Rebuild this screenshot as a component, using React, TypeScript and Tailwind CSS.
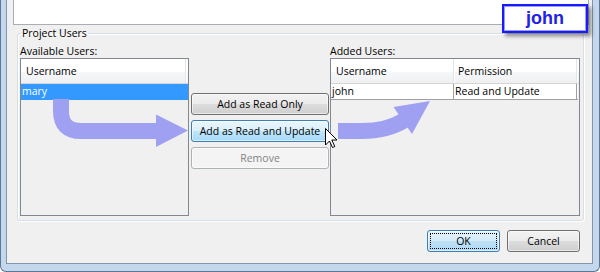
import type { ReactNode } from "react";

const ui = "[font-family:'Open_Sans',sans-serif] text-[10.5px] text-black";

type Variant = "normal" | "hover" | "default" | "disabled";

const variants: Record<Variant, string> = {
  normal:
    "border-[#707070] bg-[linear-gradient(#f2f2f2,#ebebeb_50%,#dddddd_50%,#cfcfcf)] text-black",
  hover:
    "border-[#3c7fb1] bg-[linear-gradient(#eaf6fd,#d9f0fc_50%,#bee6fd_50%,#a7d9f5)] text-black",
  default:
    "border-[#3c7fb1] bg-[linear-gradient(#e5f3fb,#d4ecfa_50%,#bfe1f6_50%,#b0d8f3)] text-black",
  disabled: "border-[#adb2b5] bg-[#f4f4f4] text-[#838383]",
};

function WinButton({
  children,
  variant = "normal",
  className = "",
  focused = false,
}: {
  children: ReactNode;
  variant?: Variant;
  className?: string;
  focused?: boolean;
}) {
  return (
    <button
      className={`relative flex items-center justify-center border rounded-[3px] shadow-[inset_0_0_0_1px_rgba(255,255,255,0.55)] leading-none ${variants[variant]} ${className}`}
    >
      {focused && <span className="absolute inset-[2px] border border-dotted border-black" />}
      <span className="relative">{children}</span>
    </button>
  );
}

function HeaderCell({ children, className = "" }: { children?: ReactNode; className?: string }) {
  return (
    <div
      className={`flex items-center pt-[2px] h-full border-r border-[#e3e5e8] shadow-[1px_0_0_#fff] ${className}`}
    >
      {children}
    </div>
  );
}

const headerBg =
  "bg-[linear-gradient(#ffffff,#ffffff_55%,#f6f7f8_55%,#eff0f2)] border-b border-[#d5d5d5]";

function AvailableList() {
  return (
    <div className="h-[158px] border border-[#828790] bg-[#f0f0f0] flex flex-col">
      <div className={`h-[25px] flex ${headerBg}`}>
        <HeaderCell className="w-[165px] pl-[5px]">Username</HeaderCell>
      </div>
      <div className="h-[16px] bg-[#3399ff] text-white pl-[1px] flex items-center">mary</div>
    </div>
  );
}

function AddedList() {
  return (
    <div className="h-[158px] border border-[#828790] bg-[#f0f0f0] flex flex-col">
      <div className={`h-[25px] flex ${headerBg}`}>
        <HeaderCell className="w-[123px] pl-[5px]">Username</HeaderCell>
        <HeaderCell className="w-[123px] pl-[4px]">Permission</HeaderCell>
      </div>
      <div className="h-[16px] flex bg-white border-b border-[#a0a0a0] w-[247px]">
        <div className="w-[123px] border-r border-[#a0a0a0] pl-[1px] flex items-center">john</div>
        <div className="w-[123px] border-r border-[#a0a0a0] pl-[1px] flex items-center">Read and Update</div>
      </div>
    </div>
  );
}

function Arrows() {
  return (
    <svg
      className="absolute left-0 top-0 pointer-events-none"
      width="600"
      height="272"
      viewBox="0 0 600 272"
    >
      <g fill="none" stroke="#a0a0f2" strokeWidth="16">
        <path d="M61 99 V111 Q61 131 81 131 H158" />
        <path d="M338 131 H362 Q387 131 404 120.5" />
      </g>
      <g fill="#a0a0f2">
        <polygon points="156,114.5 188,130.5 156,147" />
        <polygon points="393.5,107 430,101 412,134" />
      </g>
      <path
        d="M325.5 128.5 V145 L329.5 141 L332.5 147.5 L334.8 146.5 L331.8 140 L337 140 Z"
        fill="#fff"
        stroke="#000"
        strokeWidth="1"
        strokeLinejoin="miter"
      />
    </svg>
  );
}

export default function App() {
  return (
    <div className={`relative w-[600px] h-[272px] overflow-hidden bg-white ${ui}`}>
      {/* window frame */}
      <div className="flex flex-col w-full h-full bg-[#c3d7ed] pl-[5px] pr-[6px] pb-[7px] border-l border-r border-b border-[#5f7796] rounded-b-[6px]">
        <div className="flex-1 flex flex-col bg-[#f0f0f0] border-l border-r border-b border-[#8596ab]">
          {/* text area cut off at the top */}
          <div className="h-[25px] ml-[6px] mr-[3px] bg-white border-l border-r border-b border-[#abadb3]" />

          <fieldset className="mt-[1px] ml-[10px] mr-[8px] pl-[2px] pr-[3px] pt-[2px] pb-[4px] border border-[#d5dfe5] rounded-[3px] shadow-[inset_1px_1px_0_#fff,1px_1px_0_#fff]">
            <legend className="ml-[1px] px-[1px] leading-[15px]">Project Users</legend>
            <div className="flex">
              <div className="w-[169px] flex flex-col">
                <div className="h-[15px] leading-[17px]">Available Users:</div>
                <AvailableList />
              </div>

              <div className="w-[141px] pl-[2px] pr-[1px] pt-[50px] flex flex-col gap-[5px]">
                <WinButton className="h-[22px] w-[138px]">Add as Read Only</WinButton>
                <WinButton variant="hover" className="h-[22px] w-[138px]">
                  Add as Read and Update
                </WinButton>
                <WinButton variant="disabled" className="h-[22px] w-[138px]">
                  Remove
                </WinButton>
              </div>

              <div className="w-[250px] flex flex-col">
                <div className="h-[15px] leading-[17px]">Added Users:</div>
                <AddedList />
              </div>
            </div>
          </fieldset>

          <div className="mt-[9px] pr-[12px] flex justify-end gap-[7px]">
            <WinButton variant="default" focused className="h-[22px] w-[73px]">
              OK
            </WinButton>
            <WinButton className="h-[22px] w-[73px]">Cancel</WinButton>
          </div>
        </div>
      </div>

      {/* name badge */}
      <div className="absolute left-[502px] top-[4px] w-[86px] h-[29px] flex items-center justify-center bg-white border-2 border-[#1a1aff] shadow-[inset_0_0_0_1px_#9a9aff,3px_3px_4px_rgba(0,0,0,0.45)]">
        <span className="[font-family:'Liberation_Sans',sans-serif] font-bold text-[18px] text-[#2222e6] leading-none pb-[2px]">
          john
        </span>
      </div>

      <Arrows />
    </div>
  );
}
